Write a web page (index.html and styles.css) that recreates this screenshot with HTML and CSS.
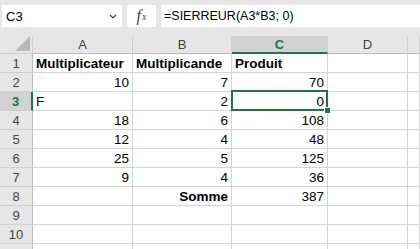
FILE: index.html
```html
<!DOCTYPE html>
<html lang="fr">
<head>
    <meta charset="UTF-8">
    <title>Classeur - SIERREUR</title>
    <link rel="stylesheet" href="styles.css">
</head>
<body>
    <!-- Barre de formule -->
    <div class="barre">
        <div class="nom">
            <span>C3</span>
            <svg class="chevron" viewBox="0 0 8 5" width="8" height="5"><path d="M1 1 L4 4 L7 1" fill="none" stroke="#444" stroke-width="1.2"/></svg>
        </div>
        <div class="fx"><i>f</i><sub>x</sub></div>
        <div class="formule">=SIERREUR(A3*B3; 0)</div>
    </div>

    <!-- Grille -->
    <div class="grille">
        <div class="entete coin"><span class="triangle"></span></div>
        <div class="entete col">A</div>
        <div class="entete col">B</div>
        <div class="entete col actif">C</div>
        <div class="entete col">D</div>
        <div class="entete col"></div>

        <div class="entete ligne">1</div>
        <div class="cell gras">Multiplicateur</div>
        <div class="cell gras">Multiplicande</div>
        <div class="cell gras">Produit</div>
        <div class="cell"></div><div class="cell"></div>

        <div class="entete ligne">2</div>
        <div class="cell num">10</div>
        <div class="cell num">7</div>
        <div class="cell num">70</div>
        <div class="cell"></div><div class="cell"></div>

        <div class="entete ligne actif">3</div>
        <div class="cell">F</div>
        <div class="cell num">2</div>
        <div class="cell num selection">0<span class="poignee"></span></div>
        <div class="cell"></div><div class="cell"></div>

        <div class="entete ligne">4</div>
        <div class="cell num">18</div>
        <div class="cell num">6</div>
        <div class="cell num">108</div>
        <div class="cell"></div><div class="cell"></div>

        <div class="entete ligne">5</div>
        <div class="cell num">12</div>
        <div class="cell num">4</div>
        <div class="cell num">48</div>
        <div class="cell"></div><div class="cell"></div>

        <div class="entete ligne">6</div>
        <div class="cell num">25</div>
        <div class="cell num">5</div>
        <div class="cell num">125</div>
        <div class="cell"></div><div class="cell"></div>

        <div class="entete ligne">7</div>
        <div class="cell num">9</div>
        <div class="cell num">4</div>
        <div class="cell num">36</div>
        <div class="cell"></div><div class="cell"></div>

        <div class="entete ligne">8</div>
        <div class="cell"></div>
        <div class="cell num gras">Somme</div>
        <div class="cell num">387</div>
        <div class="cell"></div><div class="cell"></div>

        <div class="entete ligne">9</div>
        <div class="cell"></div><div class="cell"></div><div class="cell"></div><div class="cell"></div><div class="cell"></div>

        <div class="entete ligne">10</div>
        <div class="cell"></div><div class="cell"></div><div class="cell"></div><div class="cell"></div><div class="cell"></div>

        <div class="entete ligne"></div>
        <div class="cell"></div><div class="cell"></div><div class="cell"></div><div class="cell"></div><div class="cell"></div>
    </div>
</body>
</html>
```

FILE: styles.css
```css
body {
    margin: 0;
    height: 249px;
    overflow: hidden;
    background: #e6e6e6;
    font-family: 'Liberation Sans', Arial, sans-serif;
    color: #000;
}

/* Barre de formule */
.barre {
    display: flex;
    gap: 5px;
    padding: 5px 0 9px 2px;
    height: 22px;
}

.nom {
    width: 120px;
    background: #fff;
    display: flex;
    align-items: center;
    justify-content: space-between;
    padding: 0 5px 0 4px;
    box-sizing: border-box;
    font-size: 13px;
}

.chevron { display: block; }

.fx {
    width: 29px;
    background: #fff;
    display: flex;
    align-items: center;
    justify-content: center;
    font-family: 'Liberation Serif', serif;
    color: #444;
    font-size: 16px;
}
.fx sub { font-size: 10px; font-style: italic; vertical-align: -1px; margin-left: 1px; }

.formule {
    flex: 1;
    background: #fff;
    display: flex;
    align-items: center;
    padding-left: 3px;
    font-size: 12.5px;
}

/* Grille */
.grille {
    display: grid;
    grid-template-columns: 33px 100px 99px 96px 80px 1fr;
    grid-template-rows: 18px;
    grid-auto-rows: 19px;
    background: #fff;
}

.entete {
    background: #e6e6e6;
    color: #444;
    font-size: 13px;
    display: flex;
    align-items: center;
    justify-content: center;
    border-right: 1px solid #d0d0d0;
    border-bottom: 1px solid #cfcfcf;
    box-sizing: border-box;
}

.entete.col { border-bottom: 1px solid #bdbdbd; }
.entete.ligne { border-right: 1px solid #bdbdbd; padding-top: 1px; }

.entete.col.actif {
    background: #d2d2d2;
    color: #217346;
    font-weight: bold;
    border-bottom: 2px solid #217346;
}

.entete.ligne.actif {
    background: #d2d2d2;
    color: #217346;
    font-weight: bold;
    border-right: 2px solid #217346;
}

.coin { position: relative; }

.triangle {
    position: absolute;
    right: 2px;
    bottom: 2px;
    width: 0;
    height: 0;
    border-left: 15px solid transparent;
    border-bottom: 15px solid #b8b8b8;
}

.cell {
    font-size: 13.5px;
    display: flex;
    align-items: center;
    padding: 1px 3px 0 3px;
    border-right: 1px solid #d4d4d4;
    border-bottom: 1px solid #d4d4d4;
    box-sizing: border-box;
    white-space: nowrap;
    min-width: 0;
}

.num { justify-content: flex-end; }
.gras { font-weight: bold; }

/* Cellule active C3 */
.selection { position: relative; }

.selection::after {
    content: '';
    position: absolute;
    top: -2px;
    left: -1px;
    right: -1px;
    bottom: -1px;
    border: 2px solid #217346;
    pointer-events: none;
}

.poignee {
    position: absolute;
    right: -4px;
    bottom: -4px;
    width: 5px;
    height: 5px;
    background: #217346;
    border: 1px solid #fff;
    z-index: 2;
}
```
